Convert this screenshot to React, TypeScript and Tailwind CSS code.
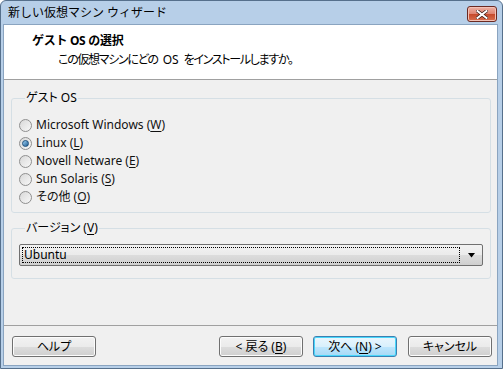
import React from "react";

const font = "[font-family:'Noto_Sans','Noto_Sans_CJK_JP',sans-serif] [font-feature-settings:'palt']";

function Mn({ c }: { c: string }) {
  return (
    <span>
      (<span className="underline underline-offset-2">{c}</span>)
    </span>
  );
}

function Radio({ label, mn, checked }: { label: string; mn: string; checked?: boolean }) {
  return (
    <div className="flex h-[18px] items-center gap-[4px]">
      <div className="flex h-[13px] w-[13px] items-center justify-center rounded-full border border-[#8f8f8f] bg-gradient-to-br from-[#d8d8d8] to-[#f8f8f8]">
        {checked && (
          <div className="h-[7px] w-[7px] rounded-full border border-[#1c4f7c] bg-gradient-to-br from-[#9fd3f6] to-[#1f5f93]" />
        )}
      </div>
      <span className="text-[12px] leading-[14px] text-[#111]">
        {label} <Mn c={mn} />
      </span>
    </div>
  );
}

function Btn({ children, def }: { children: React.ReactNode; def?: boolean }) {
  return (
    <div
      className={
        "flex h-[21px] w-[84px] items-center justify-center rounded-[3px] border text-[12px] leading-[14px] text-black " +
        (def
          ? "border-[#3c7fb1] bg-[linear-gradient(#eaf6fd_0%,#d9f0fc_50%,#bee6fd_50%,#a7d9f5_100%)] shadow-[inset_0_0_0_1px_#48d7fb]"
          : "border-[#707070] bg-[linear-gradient(#f2f2f2_0%,#ebebeb_50%,#dddddd_50%,#cfcfcf_100%)] shadow-[inset_0_0_0_1px_#fcfcfc]")
      }
    >
      {children}
    </div>
  );
}

export default function App() {
  return (
    <div className={"flex h-[369px] w-[503px] flex-col overflow-hidden rounded-t-[6px] border border-[#56708c] bg-[#b7cfe8] " + font}>
      {/* Title bar */}
      <div className="flex h-[23px] shrink-0 items-center justify-between pl-[7px] pr-[5px]">
        <span className="text-[12px] leading-[14px] text-black [font-feature-settings:normal]">新しい仮想マシン ウィザード</span>
        <div className="mt-[3px] flex h-[16px] w-[30px] items-center justify-center rounded-[3px] border border-[#6b2a22] bg-[linear-gradient(#eeb2a4_0%,#de8370_50%,#c5492a_50%,#d8704f_100%)] shadow-[inset_0_0_0_1px_#f3c2b6]">
          <svg width="12" height="9" viewBox="0 0 12 9">
            <path d="M1.5 1 L10.5 8 M10.5 1 L1.5 8" stroke="#3a1a14" strokeWidth="3.4" strokeLinecap="square" />
            <path d="M1.5 1 L10.5 8 M10.5 1 L1.5 8" stroke="#ffffff" strokeWidth="2" strokeLinecap="square" />
          </svg>
        </div>
      </div>

      {/* Client */}
      <div className="ml-[2px] mr-[4px] mb-[2px] flex flex-1 flex-col border border-[#8aa4c0] bg-[#f0f0f0]">
        {/* Header */}
        <div className="flex h-[55px] shrink-0 flex-col border-b border-[#a0a0a0] bg-white pl-[28px] pt-[9px]">
          <span className="text-[12px] font-bold leading-[14px] tracking-[-0.3px] text-black [font-feature-settings:normal]">ゲスト OS の選択</span>
          <span className="ml-[26px] mt-[5px] text-[12px] leading-[14px] text-black">
            <span className="tracking-[-1.3px]">この仮想マシンにどの</span>
            <span className="mx-[5px]">OS</span>
            <span className="tracking-[-1.3px]">をインストールしますか。</span>
          </span>
        </div>

        {/* Body */}
        <div className="flex flex-1 flex-col pl-[7px] pr-[6px]">
          <fieldset className="mt-[11px] rounded-[3px] border border-[#d5dfe5] pb-[6px] pl-[7px] pt-[11px]">
            <legend className="ml-[6px] px-[1px] text-[12px] leading-[14px] text-black">ゲスト OS</legend>
            <Radio label="Microsoft Windows" mn="W" />
            <Radio label="Linux" mn="L" checked />
            <Radio label="Novell Netware" mn="E" />
            <Radio label="Sun Solaris" mn="S" />
            <Radio label="その他" mn="O" />
          </fieldset>

          <fieldset className="mt-[8px] rounded-[3px] border border-[#d5dfe5] px-[7px] pb-[12px] pt-[9px]">
            <legend className="ml-[6px] px-[1px] text-[12px] leading-[14px] text-black">
              バージョン <Mn c="V" />
            </legend>
            <div className="flex h-[22px] items-center rounded-[2px] border border-[#707070] bg-[linear-gradient(#f2f2f2_0%,#ebebeb_50%,#dddddd_50%,#cfcfcf_100%)] pl-[2px] pr-[6px]">
              <div className="flex h-[16px] flex-1 items-center border border-dotted border-black pl-[1px] text-[12px] leading-[14px] text-black">
                Ubuntu
              </div>
              <svg width="8" height="5" viewBox="0 0 8 5" className="ml-[8px]">
                <path d="M0 0 H7 L3.5 4.5 Z" fill="#000" />
              </svg>
            </div>
          </fieldset>

          <div className="flex-1" />
        </div>

        {/* Footer */}
        <div className="flex h-[40px] shrink-0 items-start justify-between border-t border-[#a0a0a0] pl-[8px] pr-[5px] pt-[10px]">
          <Btn>ヘルプ</Btn>
          <div className="flex gap-[10px]">
            <Btn>
              &lt; 戻る <span className="ml-[3px]"><Mn c="B" /></span>
            </Btn>
            <Btn def>
              次へ <span className="mx-[3px]"><Mn c="N" /></span> &gt;
            </Btn>
            <div className="ml-[1px]">
              <Btn>キャンセル</Btn>
            </div>
          </div>
        </div>
      </div>
    </div>
  );
}
